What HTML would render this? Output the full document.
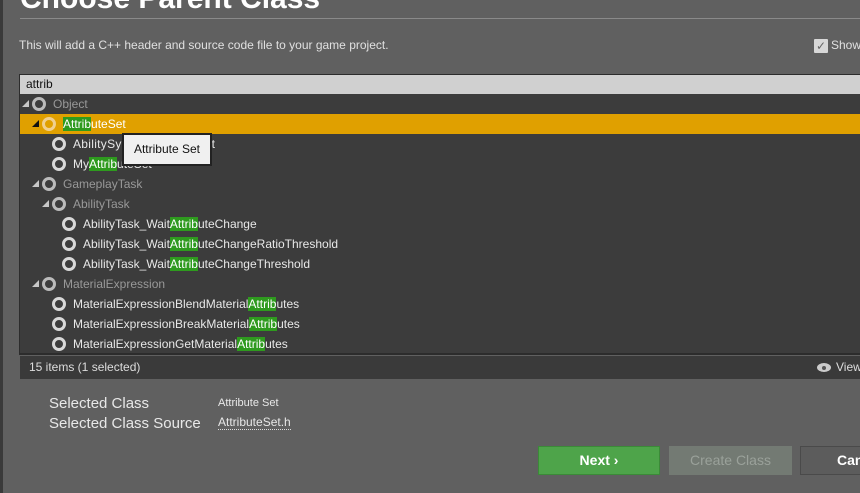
<!DOCTYPE html>
<html><head><style>
*{margin:0;padding:0;box-sizing:border-box}
body{width:860px;height:493px;overflow:hidden;background:#606060;font-family:"Liberation Sans",sans-serif;position:relative}
.ab{position:absolute}
.row{position:absolute;left:20px;width:840px;height:20px;font-size:12px;line-height:20px;color:#e8e8e8;white-space:nowrap}
.row .c{position:absolute;top:3px;width:14px;height:14px;border:3px solid #d8d8d8;border-radius:50%}
.row .t{position:absolute;top:0}
.row .ar{position:absolute;top:6px;width:0;height:0;border-left:7px solid transparent;border-bottom:7px solid #c8c8c8}
.g{color:#999}.g .c{border-color:#bbb}
.h{background:#2e9a1e;color:#fff}
</style></head><body>
<div class="ab" style="left:0;top:0;width:3px;height:493px;background:#3a3a3a"></div>
<div class="ab" style="left:20px;top:-18px;font-size:30px;font-weight:bold;color:#fff;white-space:nowrap">Choose Parent Class</div>
<div class="ab" style="left:20px;top:18px;width:840px;height:1px;background:#8a8a8a"></div>
<div class="ab" style="left:19px;top:38px;font-size:12px;color:#e0e0e0">This will add a C++ header and source code file to your game project.</div>
<div class="ab" style="left:814px;top:39px;width:14px;height:14px;background:#d8d8d8;border-radius:1px;color:#666;font-size:12px;line-height:14px;text-align:center">✓</div>
<div class="ab" style="left:831px;top:38px;font-size:12px;color:#e0e0e0">Show</div>
<div class="ab" style="left:19px;top:74px;width:841px;height:281px;background:#2c2c2c"></div>
<div class="ab" style="left:20px;top:75px;width:840px;height:19px;background:#d0d0d0;font-size:12px;line-height:19px;padding-left:6px;color:#111">attrib</div>
<div class="ab" style="left:20px;top:94px;width:840px;height:259px;background:#3c3c3c"></div>
<div class="ab" style="left:20px;top:114px;width:840px;height:20px;background:#e0a000"></div>

<div class="row g" style="top:94px"><span class="ar" style="left:2px"></span><span class="c" style="left:12px"></span><span class="t" style="left:33px">Object</span></div>
<div class="row" style="top:114px;color:#fff"><span class="ar" style="left:12px;border-bottom-color:#111"></span><span class="c" style="left:22px;border-color:#f0d090"></span><span class="t" style="left:43px"><span class="h">Attrib</span>uteSet</span></div>
<div class="row" style="top:134px"><span class="c" style="left:32px"></span><span class="t" style="left:53px;letter-spacing:0.3px">AbilitySystemAttributeSet</span></div>
<div class="row" style="top:154px"><span class="c" style="left:32px"></span><span class="t" style="left:53px">My<span class="h">Attrib</span>uteSet</span></div>
<div class="row g" style="top:174px"><span class="ar" style="left:12px"></span><span class="c" style="left:22px"></span><span class="t" style="left:43px">GameplayTask</span></div>
<div class="row g" style="top:194px"><span class="ar" style="left:22px"></span><span class="c" style="left:32px"></span><span class="t" style="left:53px">AbilityTask</span></div>
<div class="row" style="top:214px"><span class="c" style="left:42px"></span><span class="t" style="left:63px">AbilityTask_Wait<span class="h">Attrib</span>uteChange</span></div>
<div class="row" style="top:234px"><span class="c" style="left:42px"></span><span class="t" style="left:63px">AbilityTask_Wait<span class="h">Attrib</span>uteChangeRatioThreshold</span></div>
<div class="row" style="top:254px"><span class="c" style="left:42px"></span><span class="t" style="left:63px">AbilityTask_Wait<span class="h">Attrib</span>uteChangeThreshold</span></div>
<div class="row g" style="top:274px"><span class="ar" style="left:12px"></span><span class="c" style="left:22px"></span><span class="t" style="left:43px">MaterialExpression</span></div>
<div class="row" style="top:294px"><span class="c" style="left:32px"></span><span class="t" style="left:53px">MaterialExpressionBlendMaterial<span class="h">Attrib</span>utes</span></div>
<div class="row" style="top:314px"><span class="c" style="left:32px"></span><span class="t" style="left:53px">MaterialExpressionBreakMaterial<span class="h">Attrib</span>utes</span></div>
<div class="row" style="top:334px"><span class="c" style="left:32px"></span><span class="t" style="left:53px">MaterialExpressionGetMaterial<span class="h">Attrib</span>utes</span></div>

<div class="ab" style="left:122px;top:133px;width:90px;height:33px;background:#f0f0f0;border:2px solid #222;font-size:12px;line-height:29px;text-align:center;color:#111">Attribute Set</div>

<div class="ab" style="left:20px;top:356px;width:840px;height:23px;background:#3a3a3a;font-size:12px;line-height:23px;color:#ddd;padding-left:9px">15 items (1 selected)</div>
<div class="ab" style="left:817px;top:363px;width:14px;height:9px;background:#ccc;border-radius:50%"></div>
<div class="ab" style="left:822px;top:366px;width:4px;height:4px;background:#555;border-radius:50%"></div>
<div class="ab" style="left:836px;top:356px;font-size:12px;line-height:23px;color:#ddd">View</div>

<div class="ab" style="left:49px;top:394px;font-size:15px;color:#e8e8e8;line-height:20px">Selected Class<br>Selected Class Source</div>
<div class="ab" style="left:218px;top:397px;font-size:11px;color:#e8e8e8">Attribute Set</div>
<div class="ab" style="left:218px;top:415px;font-size:12px;color:#e8e8e8;border-bottom:1px dotted #ddd">AttributeSet.h</div>

<div class="ab" style="left:538px;top:446px;width:122px;height:29px;background:#4ea44a;border:1px solid #3b8a38;color:#fff;font-weight:bold;font-size:14px;line-height:27px;text-align:center">Next ›</div>
<div class="ab" style="left:669px;top:446px;width:123px;height:29px;background:#737a73;color:#9aa19a;font-size:14px;line-height:29px;text-align:center">Create Class</div>
<div class="ab" style="left:800px;top:446px;width:70px;height:29px;background:#5c5c5c;border:1px solid #4a4a4a;color:#fff;font-weight:bold;font-size:14px;line-height:27px;padding-left:36px">Cancel</div>
</body></html>
